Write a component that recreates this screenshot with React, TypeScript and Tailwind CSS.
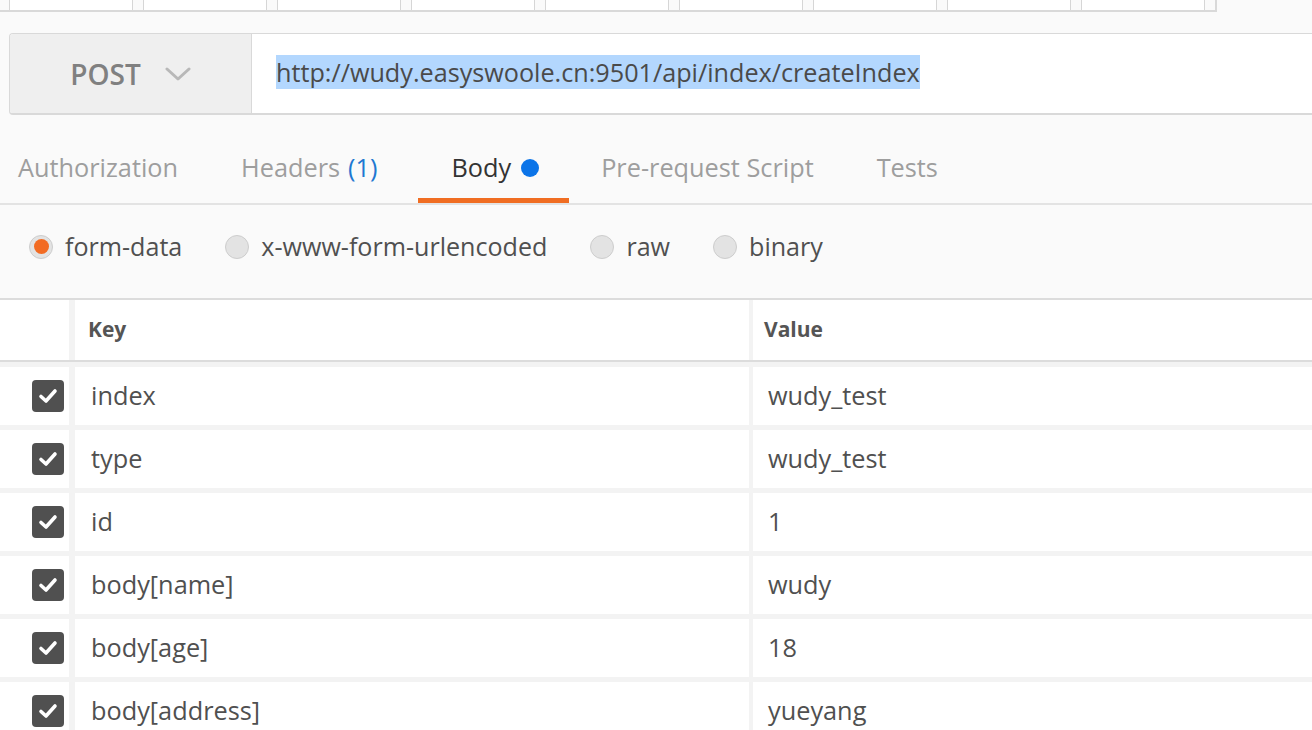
import { useState } from "react"

type Row = { key: string; value: string }

const rows: Row[] = [
  { key: "index", value: "wudy_test" },
  { key: "type", value: "wudy_test" },
  { key: "id", value: "1" },
  { key: "body[name]", value: "wudy" },
  { key: "body[age]", value: "18" },
  { key: "body[address]", value: "yueyang" },
]

const bodyTypes = ["form-data", "x-www-form-urlencoded", "raw", "binary"]

function Checkbox() {
  return (
    <div className="w-[32px] h-[32px] rounded-[4px] bg-[#505050] flex items-center justify-center">
      <svg width="24" height="24" viewBox="0 0 24 24" fill="none">
        <polyline points="5,12.5 10,17 19,7" stroke="#fff" strokeWidth="3.6" strokeLinecap="round" strokeLinejoin="round" />
      </svg>
    </div>
  )
}

function Radio({ checked }: { checked: boolean }) {
  return (
    <div className="w-[24px] h-[24px] rounded-full bg-[#e3e3e3] border border-[#cdcdcd] flex items-center justify-center">
      {checked && <div className="w-[15px] h-[15px] rounded-full bg-[#f26b23]" />}
    </div>
  )
}

export default function App() {
  const [bodyType, setBodyType] = useState("form-data")

  return (
    <div className="w-[1312px] h-[730px] overflow-hidden bg-[#fafafa] text-[#505050] font-['Open_Sans',sans-serif]">
      {/* request tabs strip */}
      <div className="flex h-[12px]">
        <div className="w-[1217px] h-full flex gap-[10px] pl-[9px] border-b-2 border-r-2 border-[#d9d9d9]">
          {Array.from({ length: 9 }).map((_, i) => (
            <div key={i} className="w-[124px] h-full bg-white border-x border-[#d6d6d6]" />
          ))}
        </div>
      </div>

      {/* url bar */}
      <div className="mt-[21px] ml-[9px] h-[82px] flex border-t border-l border-b-2 border-[#d9d9d9] rounded-l-[4px] overflow-hidden">
        <div className="w-[242px] shrink-0 bg-[#efefef] border-r border-[#d9d9d9] flex items-center justify-center gap-[24px]">
          <span className="text-[28px] font-semibold text-[#808080]">POST</span>
          <svg width="26" height="16" viewBox="0 0 26 16" fill="none">
            <polyline points="2,3 13,13 24,3" stroke="#b8b8b8" strokeWidth="3" strokeLinecap="round" strokeLinejoin="round" />
          </svg>
        </div>
        <div className="flex-1 bg-white flex items-center pl-[24px] pb-[4px]">
          <span className="text-[25.2px] leading-[34px] bg-[#b3d7fe] text-[#4a4a4a]">
            http://wudy.easyswoole.cn:9501/api/index/createIndex
          </span>
        </div>
      </div>

      {/* sub tabs */}
      <div className="h-[90px] flex border-b-2 border-[#e3e3e3] text-[25.3px]">
        <div className="h-full pl-[18px] pr-[31px] pt-[23px] border-b-[5px] border-transparent mb-[2px] flex items-center text-[#9e9e9e]">
          Authorization
        </div>
        <div className="h-full px-[32px] pt-[23px] border-b-[5px] border-transparent mb-[2px] flex items-center text-[#9e9e9e]">
          Headers<span className="ml-[8px] text-[#1f78d1]">(1)</span>
        </div>
        <div className="h-full ml-[9px] pl-[33px] pr-[30px] pt-[23px] border-b-[5px] border-[#f06d22] mb-[2px] flex items-center text-[#333]">
          Body
          <span className="ml-[10px] w-[18px] h-[18px] rounded-full bg-[#0b74e8]" />
        </div>
        <div className="h-full px-[32px] pt-[23px] border-b-[5px] border-transparent mb-[2px] flex items-center text-[#9e9e9e]">
          Pre-request Script
        </div>
        <div className="h-full px-[31px] pt-[23px] border-b-[5px] border-transparent mb-[2px] flex items-center text-[#9e9e9e]">
          Tests
        </div>
      </div>

      {/* body type */}
      <div className="h-[93px] flex items-center pb-[9px] pl-[29px] gap-[43px] text-[25.1px]">
        {bodyTypes.map((t) => (
          <button key={t} onClick={() => setBodyType(t)} className="flex items-center gap-[12px] text-[#505050]">
            <Radio checked={bodyType === t} />
            <span>{t}</span>
          </button>
        ))}
      </div>

      {/* key/value table */}
      <div className="border-t-2 border-[#dcdcdc]">
        <div className="h-[62px] flex bg-white border-b-2 border-[#dcdcdc] text-[21px] font-bold text-[#555]">
          <div className="w-[75px] shrink-0 border-r-[6px] border-[#f3f3f3]" />
          <div className="w-[678px] shrink-0 border-r-[4px] border-[#f3f3f3] flex items-center pl-[13px]">Key</div>
          <div className="flex-1 flex items-center pl-[11px]">Value</div>
        </div>
        {rows.map((r) => (
          <div key={r.key} className="h-[63px] flex bg-white border-t-[5px] border-[#f3f3f3] text-[25.3px]">
            <div className="w-[75px] shrink-0 border-r-[6px] border-[#f3f3f3] flex items-center justify-end pr-[5px]">
              <Checkbox />
            </div>
            <div className="w-[678px] shrink-0 border-r-[4px] border-[#f3f3f3] flex items-center pl-[16px]">{r.key}</div>
            <div className="flex-1 flex items-center pl-[15px]">{r.value}</div>
          </div>
        ))}
      </div>
    </div>
  )
}
